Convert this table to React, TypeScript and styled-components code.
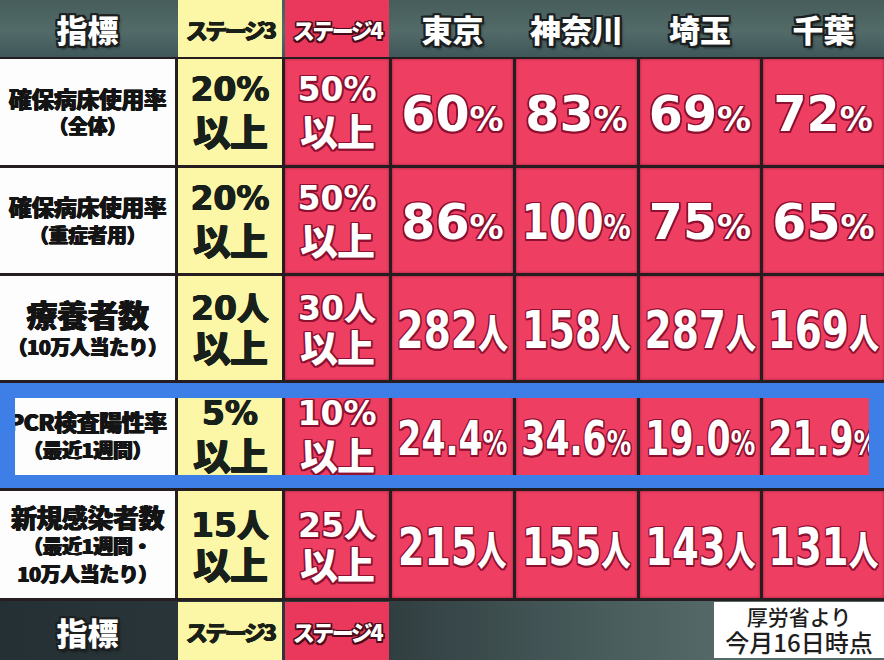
import React from 'react';
import styled, { createGlobalStyle } from 'styled-components';

const GlobalStyle = createGlobalStyle`
  html, body { margin: 0; padding: 0; background: #3f5452; }
  body { width: 884px; height: 660px; overflow: hidden; }
  * { box-sizing: border-box; }
`;

const COLS = '175px 104px 104px 121px 121px 120px 121px';
const JP = `"Noto Sans CJK JP", "Noto Sans", sans-serif`;
const NUM = `"DejaVu Sans", "Liberation Sans", sans-serif`;

const outline = (c: string, w: number) =>
  [
    `${-w}px ${-w}px 0 ${c}`,
    `${w}px ${-w}px 0 ${c}`,
    `${-w}px ${w}px 0 ${c}`,
    `${w}px ${w}px 0 ${c}`,
    `0 ${w}px 0 ${c}`,
    `0 ${-w}px 0 ${c}`,
    `${w}px 0 0 ${c}`,
    `${-w}px 0 0 ${c}`,
  ].join(', ');

const heavy = (c: string) => `0.6px 0 0 ${c}, -0.6px 0 0 ${c}, 0 0.4px 0 ${c}`;

const YELLOW = '#fbf7a6';
const RED = '#ee3f62';
const RED_HEAD = '#ea385c';

const Board = styled.div`
  width: 884px;
  height: 660px;
  display: flex;
  flex-direction: column;
  background: #3f5452;
  font-family: ${JP};
`;

const HeaderRow = styled.div`
  display: grid;
  grid-template-columns: ${COLS};
  column-gap: 3px;
  height: 57px;
  background: linear-gradient(180deg, #465d5c 0%, #526a68 55%, #40575a 100%);
`;

const HeadText = styled.div`
  display: flex;
  align-items: center;
  justify-content: center;
  color: #ffffff;
  font-size: 31px;
  font-weight: 900;
  line-height: 1;
  text-shadow: ${outline('#1c1f20', 2)}, 2px 3px 3px rgba(0, 0, 0, 0.6);
`;

const StageHead = styled.div<{ $tone: 'yellow' | 'red' }>`
  display: flex;
  align-items: center;
  justify-content: center;
  background: ${(p) => (p.$tone === 'yellow' ? YELLOW : RED_HEAD)};
  color: ${(p) => (p.$tone === 'yellow' ? '#1a1f18' : '#ffffff')};
  font-size: 22px;
  font-weight: 900;
  letter-spacing: -2.5px;
  text-shadow: ${(p) => (p.$tone === 'yellow' ? heavy('#1a1f18') : outline('#4a0b19', 1.5))};
`;

const Body = styled.div`
  display: flex;
  flex-direction: column;
  gap: 3px;
  padding: 2px 0 3px;
  background: #251d20;
`;

const Row = styled.div<{ $h: number }>`
  position: relative;
  display: grid;
  grid-template-columns: ${COLS};
  column-gap: 3px;
  height: ${(p) => p.$h}px;
`;

const LabelCell = styled.div`
  min-width: 0;
  background: #fdfdfd;
  color: #141414;
  display: flex;
  flex-direction: column;
  align-items: center;
  justify-content: center;
  gap: 2px;
  white-space: nowrap;
  text-shadow: ${heavy('#141414')};
`;

const LabelMain = styled.div<{ $size: number }>`
  font-size: ${(p) => p.$size}px;
  font-weight: 900;
  line-height: 1.15;
  letter-spacing: -0.5px;
`;

const LabelSub = styled.div`
  font-size: 20px;
  font-weight: 900;
  line-height: 1.3;
  letter-spacing: -0.5px;
`;

const StageCell = styled.div<{ $tone: 'yellow' | 'red' }>`
  min-width: 0;
  display: flex;
  flex-direction: column;
  align-items: center;
  justify-content: center;
  gap: 8px;
  background: ${(p) => (p.$tone === 'yellow' ? YELLOW : RED)};
  color: ${(p) => (p.$tone === 'yellow' ? '#17201a' : '#ffffff')};
  text-shadow: ${(p) => (p.$tone === 'yellow' ? heavy('#17201a') : outline('#8e1030', 1.5))};
  box-shadow: ${(p) => (p.$tone === 'yellow' ? 'none' : 'inset 0 0 3px rgba(110, 10, 35, 0.55)')};
`;

const StageNum = styled.div`
  font-family: ${NUM};
  font-weight: bold;
  font-size: 33px;
  line-height: 26px;
  height: 26px;
  white-space: nowrap;
`;

const StageNin = styled.span`
  font-family: ${JP};
  font-weight: 900;
  font-size: 32px;
`;

const StageWord = styled.div`
  font-size: 38px;
  font-weight: 900;
  line-height: 38px;
  height: 36px;
  letter-spacing: -1px;
`;

const ValueCell = styled.div`
  min-width: 0;
  display: flex;
  align-items: center;
  justify-content: center;
  background: ${RED};
  box-shadow: inset 0 0 3px rgba(110, 10, 35, 0.6);
  padding-top: 4px;
`;

const ValueText = styled.span<{ $size: number; $squeeze: number }>`
  display: inline-block;
  flex: none;
  white-space: nowrap;
  font-family: ${NUM};
  font-weight: bold;
  font-size: ${(p) => p.$size}px;
  line-height: 1;
  color: #ffffff;
  transform: scaleX(${(p) => p.$squeeze});
  text-shadow: ${outline('#8e1030', 1.5)};
`;

const Unit = styled.span<{ $kind: 'pct' | 'nin' }>`
  font-family: ${(p) => (p.$kind === 'pct' ? NUM : JP)};
  font-weight: 900;
  font-size: ${(p) => (p.$kind === 'pct' ? 34 : 40)}px;
`;

const Highlight = styled.div`
  position: absolute;
  inset: 0;
  border: 15px solid #3d7fe6;
  border-bottom-width: 13px;
  pointer-events: none;
`;

const FooterRow = styled.div`
  flex: 1;
  display: grid;
  grid-template-columns: 175px 104px 104px 1fr;
  column-gap: 3px;
  padding-top: 1px;
  background: linear-gradient(90deg, #243033 0%, #2d393c 40%, #485c5c 68%, #5b6f6e 88%, #506464 100%);
`;

const Note = styled.div`
  justify-self: end;
  align-self: start;
  width: 170px;
  height: 56px;
  background: #ffffff;
  color: #1e1e1e;
  display: flex;
  flex-direction: column;
  align-items: center;
  justify-content: center;
  gap: 1px;
`;

const NoteLine = styled.div<{ $size: number }>`
  font-size: ${(p) => p.$size}px;
  line-height: ${(p) => p.$size + 2}px;
  font-weight: 500;
  white-space: nowrap;
`;

type Amount = { n: string; u: '%' | '人' };
type RowData = {
  h: number;
  main: string;
  mainSize: number;
  subs: string[];
  s3: Amount;
  s4: Amount;
  size: number;
  vals: { v: Amount; squeeze: number }[];
  highlight?: boolean;
};

const v = (n: string, u: '%' | '人', squeeze: number) => ({ v: { n, u }, squeeze });

const rows: RowData[] = [
  {
    h: 106,
    main: '確保病床使用率',
    mainSize: 23,
    subs: ['（全体）'],
    s3: { n: '20', u: '%' },
    s4: { n: '50', u: '%' },
    size: 49,
    vals: [v('60', '%', 1), v('83', '%', 1), v('69', '%', 1), v('72', '%', 0.97)],
  },
  {
    h: 105,
    main: '確保病床使用率',
    mainSize: 23,
    subs: ['（重症者用）'],
    s3: { n: '20', u: '%' },
    s4: { n: '50', u: '%' },
    size: 49,
    vals: [v('86', '%', 1), v('100', '%', 0.8), v('75', '%', 1), v('65', '%', 1)],
  },
  {
    h: 104,
    main: '療養者数',
    mainSize: 31,
    subs: ['（10万人当たり）'],
    s3: { n: '20', u: '人' },
    s4: { n: '30', u: '人' },
    size: 52,
    vals: [v('282', '人', 0.75), v('158', '人', 0.73), v('287', '人', 0.75), v('169', '人', 0.75)],
  },
  {
    h: 105,
    main: 'PCR検査陽性率',
    mainSize: 23,
    subs: ['（最近1週間）'],
    s3: { n: '5', u: '%' },
    s4: { n: '10', u: '%' },
    size: 48,
    vals: [v('24.4', '%', 0.72), v('34.6', '%', 0.72), v('19.0', '%', 0.72), v('21.9', '%', 0.72)],
    highlight: true,
  },
  {
    h: 107,
    main: '新規感染者数',
    mainSize: 26,
    subs: ['（最近1週間・', '10万人当たり）'],
    s3: { n: '15', u: '人' },
    s4: { n: '25', u: '人' },
    size: 52,
    vals: [v('215', '人', 0.73), v('155', '人', 0.73), v('143', '人', 0.74), v('131', '人', 0.74)],
  },
];

const prefectures = ['東京', '神奈川', '埼玉', '千葉'];

const Stage: React.FC<{ tone: 'yellow' | 'red'; amount: Amount }> = ({ tone, amount }) => (
  <StageCell $tone={tone}>
    <StageNum>
      {amount.n}
      {amount.u === '人' ? <StageNin>人</StageNin> : '%'}
    </StageNum>
    <StageWord>以上</StageWord>
  </StageCell>
);

export default function App() {
  return (
    <>
      <GlobalStyle />
      <Board>
        <HeaderRow>
          <HeadText>指標</HeadText>
          <StageHead $tone="yellow">ステージ3</StageHead>
          <StageHead $tone="red">ステージ4</StageHead>
          {prefectures.map((p) => (
            <HeadText key={p}>{p}</HeadText>
          ))}
        </HeaderRow>
        <Body>
          {rows.map((r, i) => (
            <Row key={i} $h={r.h}>
              <LabelCell>
                <LabelMain $size={r.mainSize}>{r.main}</LabelMain>
                {r.subs.map((s) => (
                  <LabelSub key={s}>{s}</LabelSub>
                ))}
              </LabelCell>
              <Stage tone="yellow" amount={r.s3} />
              <Stage tone="red" amount={r.s4} />
              {r.vals.map((c, j) => (
                <ValueCell key={j}>
                  <ValueText $size={r.size} $squeeze={c.squeeze}>
                    {c.v.n}
                    <Unit $kind={c.v.u === '%' ? 'pct' : 'nin'}>{c.v.u}</Unit>
                  </ValueText>
                </ValueCell>
              ))}
              {r.highlight && <Highlight />}
            </Row>
          ))}
        </Body>
        <FooterRow>
          <HeadText>指標</HeadText>
          <StageHead $tone="yellow">ステージ3</StageHead>
          <StageHead $tone="red">ステージ4</StageHead>
          <Note>
            <NoteLine $size={21}>厚労省より</NoteLine>
            <NoteLine $size={24}>今月16日時点</NoteLine>
          </Note>
        </FooterRow>
      </Board>
    </>
  );
}
